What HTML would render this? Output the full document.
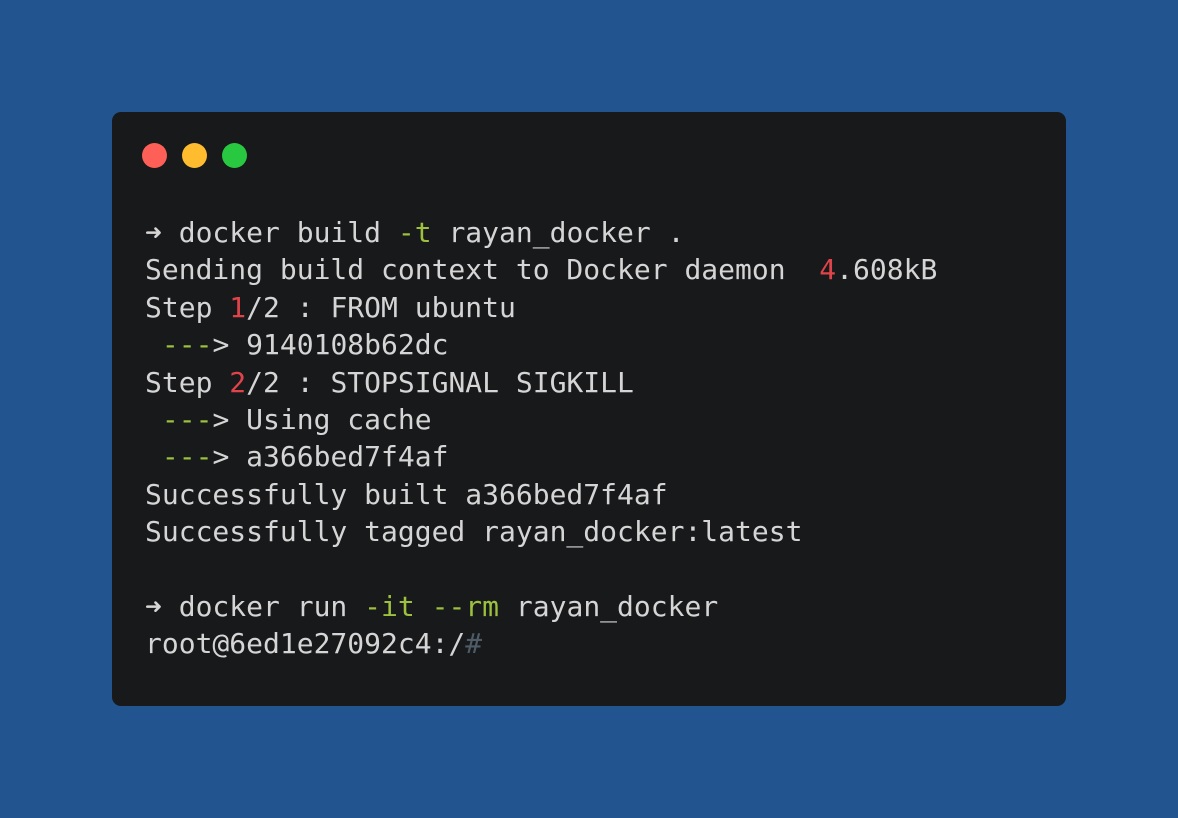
<!DOCTYPE html>
<html><head><meta charset="utf-8"><style>
html,body{margin:0;padding:0}
body{width:1178px;height:818px;background:#22558f;position:relative;overflow:hidden}
.win{position:absolute;left:112px;top:112px;width:954px;height:594px;background:#18191b;border-radius:9px}
.dot{position:absolute;top:31px;width:25px;height:25px;border-radius:50%}
pre{position:absolute;left:33px;top:102px;margin:0;font-family:"DejaVu Sans Mono","Liberation Mono",monospace;font-size:28px;line-height:37.4px;color:#d5d5d5}
.g{color:#9dc13f}.r{color:#e0444a}.h{color:#4e5c68}
</style></head><body>
<div class="win">
<div class="dot" style="left:30px;background:#fe5f57"></div>
<div class="dot" style="left:70px;background:#febc2e"></div>
<div class="dot" style="left:110px;background:#28c840"></div>
<pre>➜ docker build <span class="g">-t</span> rayan_docker .
Sending build context to Docker daemon  <span class="r">4</span>.608kB
Step <span class="r">1</span>/2 : FROM ubuntu
 <span class="g">---</span>&gt; 9140108b62dc
Step <span class="r">2</span>/2 : STOPSIGNAL SIGKILL
 <span class="g">---</span>&gt; Using cache
 <span class="g">---</span>&gt; a366bed7f4af
Successfully built a366bed7f4af
Successfully tagged rayan_docker:latest

➜ docker run <span class="g">-it</span> <span class="g">--rm</span> rayan_docker
root@6ed1e27092c4:/<span class="h">#</span></pre>
</div>
</body></html>
